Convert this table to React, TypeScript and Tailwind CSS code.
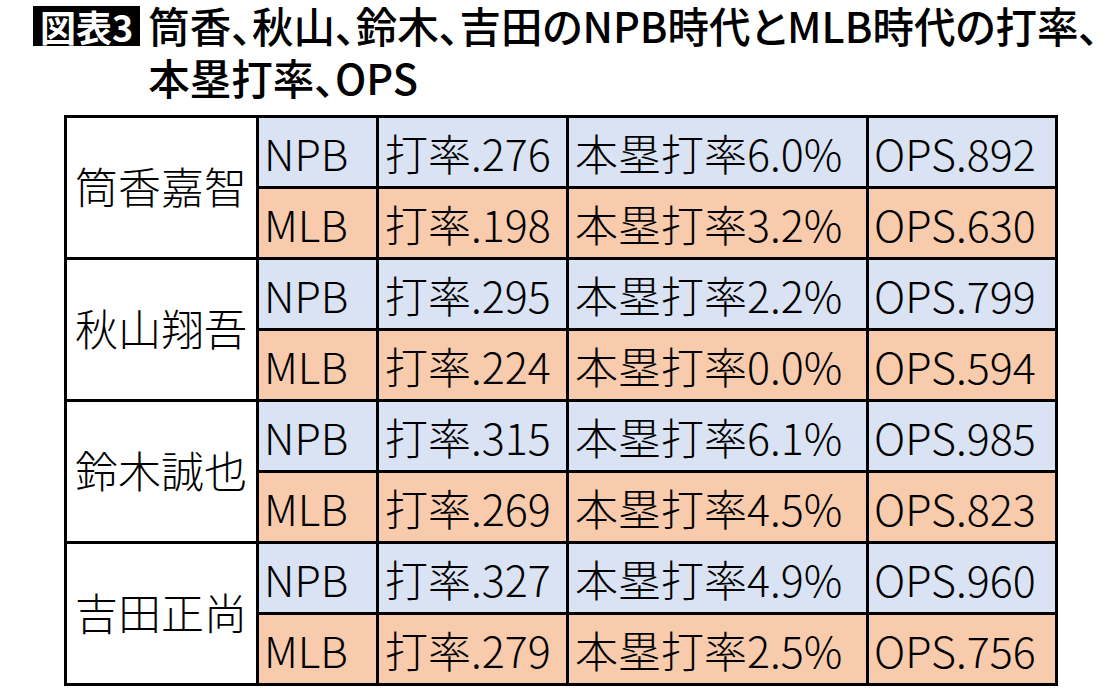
import React from "react";

type Stat = { league: "NPB" | "MLB"; avg: string; hr: string; ops: string };
type Player = { name: string; stats: Stat[] };

const players: Player[] = [
  {
    name: "筒香嘉智",
    stats: [
      { league: "NPB", avg: ".276", hr: "6.0%", ops: ".892" },
      { league: "MLB", avg: ".198", hr: "3.2%", ops: ".630" },
    ],
  },
  {
    name: "秋山翔吾",
    stats: [
      { league: "NPB", avg: ".295", hr: "2.2%", ops: ".799" },
      { league: "MLB", avg: ".224", hr: "0.0%", ops: ".594" },
    ],
  },
  {
    name: "鈴木誠也",
    stats: [
      { league: "NPB", avg: ".315", hr: "6.1%", ops: ".985" },
      { league: "MLB", avg: ".269", hr: "4.5%", ops: ".823" },
    ],
  },
  {
    name: "吉田正尚",
    stats: [
      { league: "NPB", avg: ".327", hr: "4.9%", ops: ".960" },
      { league: "MLB", avg: ".279", hr: "2.5%", ops: ".756" },
    ],
  },
];

const font = "font-['Noto_Sans_CJK_JP','Noto_Sans',sans-serif]";

export default function App() {
  return (
    <div className={`w-[1120px] h-[690px] bg-white overflow-hidden text-black ${font}`}>
      {/* Title */}
      <div className="flex items-start pl-[33px] pt-[6px] gap-[8px]">
        <div className="bg-black text-white font-bold text-[36px] leading-[40px] h-[40px] px-[7px] whitespace-nowrap">
          図表3
        </div>
        <h1 className="font-medium text-[41.5px] leading-[52px] -mt-[7px] [font-feature-settings:'palt'] w-[960px]">
          筒香、秋山、鈴木、吉田のNPB時代とMLB時代の打率、
          <br />
          本塁打率、OPS
        </h1>
      </div>

      {/* Table */}
      <div className="ml-[64px] mt-[12px] w-fit bg-black p-[3px] grid grid-cols-[189px_117px_187px_297px_186px] auto-rows-[68px] gap-[3px] font-['Noto_Sans_CJK_JP_Light','Noto_Sans_CJK_JP',sans-serif] font-light text-[43px] leading-none">
        {players.map((p) => (
          <React.Fragment key={p.name}>
            <div className="row-span-2 bg-white flex items-center pl-[8px] pb-[4px]">
              {p.name}
            </div>
            {p.stats.map((s) => {
              const bg = s.league === "NPB" ? "bg-[#dae3f3]" : "bg-[#f8cbad]";
              return (
                <React.Fragment key={s.league}>
                  <div className={`${bg} col-start-2 flex items-center pl-[5px]`}>{s.league}</div>
                  <div className={`${bg} flex items-center pl-[6px]`}>打率{s.avg}</div>
                  <div className={`${bg} flex items-center pl-[6px]`}>本塁打率{s.hr}</div>
                  <div className={`${bg} flex items-center pl-[5px]`}>OPS{s.ops}</div>
                </React.Fragment>
              );
            })}
          </React.Fragment>
        ))}
      </div>
    </div>
  );
}
